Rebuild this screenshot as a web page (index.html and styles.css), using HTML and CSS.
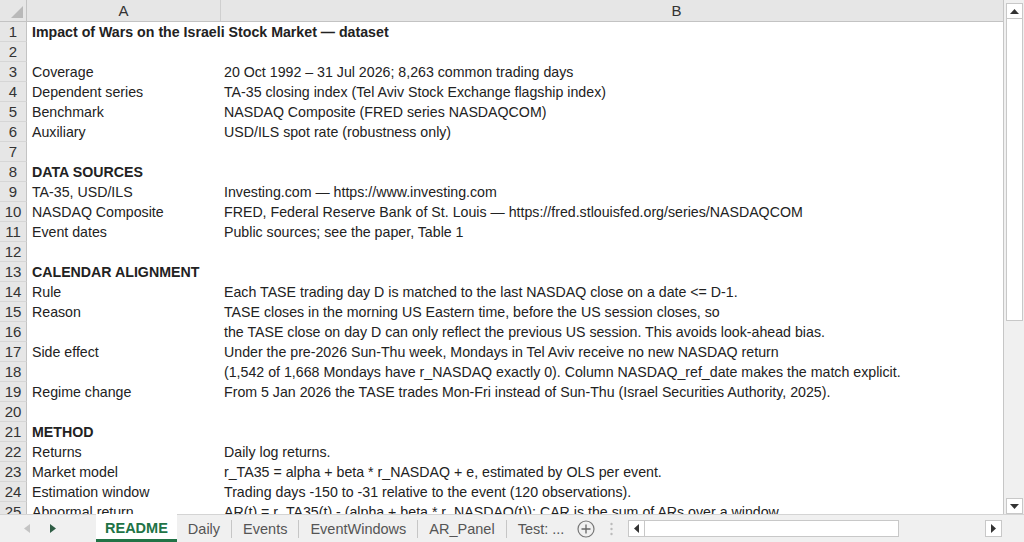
FILE: index.html
```html
<!DOCTYPE html>
<html lang="en">
<head>
    <meta charset="UTF-8">
    <title>README - Impact of Wars dataset</title>
    <link rel="stylesheet" href="styles.css">
</head>
<body>
    <div class="workbook">
        <div class="grid-area">
            <div class="sheet">
                <div class="row head-row">
                    <div class="corner">
                        <svg width="12" height="12" viewBox="0 0 12 12"><polygon points="12,0 12,12 0,12" fill="#b9b9b9"/></svg>
                    </div>
                    <div class="col-head col-a">A</div>
                    <div class="col-head col-b">B</div>
                </div>

                <div class="row"><div class="num">1</div><div class="cell col-a wide bold">Impact of Wars on the Israeli Stock Market — dataset</div><div class="cell col-b"></div></div>
                <div class="row"><div class="num">2</div><div class="cell col-a"></div><div class="cell col-b"></div></div>
                <div class="row"><div class="num">3</div><div class="cell col-a">Coverage</div><div class="cell col-b">20 Oct 1992 – 31 Jul 2026; 8,263 common trading days</div></div>
                <div class="row"><div class="num">4</div><div class="cell col-a">Dependent series</div><div class="cell col-b">TA-35 closing index (Tel Aviv Stock Exchange flagship index)</div></div>
                <div class="row"><div class="num">5</div><div class="cell col-a">Benchmark</div><div class="cell col-b">NASDAQ Composite (FRED series NASDAQCOM)</div></div>
                <div class="row"><div class="num">6</div><div class="cell col-a">Auxiliary</div><div class="cell col-b">USD/ILS spot rate (robustness only)</div></div>
                <div class="row"><div class="num">7</div><div class="cell col-a"></div><div class="cell col-b"></div></div>
                <div class="row"><div class="num">8</div><div class="cell col-a bold">DATA SOURCES</div><div class="cell col-b"></div></div>
                <div class="row"><div class="num">9</div><div class="cell col-a">TA-35, USD/ILS</div><div class="cell col-b">Investing.com — https://www.investing.com</div></div>
                <div class="row"><div class="num">10</div><div class="cell col-a">NASDAQ Composite</div><div class="cell col-b">FRED, Federal Reserve Bank of St. Louis — https://fred.stlouisfed.org/series/NASDAQCOM</div></div>
                <div class="row"><div class="num">11</div><div class="cell col-a">Event dates</div><div class="cell col-b">Public sources; see the paper, Table 1</div></div>
                <div class="row"><div class="num">12</div><div class="cell col-a"></div><div class="cell col-b"></div></div>
                <div class="row"><div class="num">13</div><div class="cell col-a wide bold">CALENDAR ALIGNMENT</div><div class="cell col-b"></div></div>
                <div class="row"><div class="num">14</div><div class="cell col-a">Rule</div><div class="cell col-b">Each TASE trading day D is matched to the last NASDAQ close on a date &lt;= D-1.</div></div>
                <div class="row"><div class="num">15</div><div class="cell col-a">Reason</div><div class="cell col-b">TASE closes in the morning US Eastern time, before the US session closes, so</div></div>
                <div class="row"><div class="num">16</div><div class="cell col-a"></div><div class="cell col-b">the TASE close on day D can only reflect the previous US session. This avoids look-ahead bias.</div></div>
                <div class="row"><div class="num">17</div><div class="cell col-a">Side effect</div><div class="cell col-b">Under the pre-2026 Sun-Thu week, Mondays in Tel Aviv receive no new NASDAQ return</div></div>
                <div class="row"><div class="num">18</div><div class="cell col-a"></div><div class="cell col-b">(1,542 of 1,668 Mondays have r_NASDAQ exactly 0). Column NASDAQ_ref_date makes the match explicit.</div></div>
                <div class="row"><div class="num">19</div><div class="cell col-a">Regime change</div><div class="cell col-b">From 5 Jan 2026 the TASE trades Mon-Fri instead of Sun-Thu (Israel Securities Authority, 2025).</div></div>
                <div class="row"><div class="num">20</div><div class="cell col-a"></div><div class="cell col-b"></div></div>
                <div class="row"><div class="num">21</div><div class="cell col-a bold">METHOD</div><div class="cell col-b"></div></div>
                <div class="row"><div class="num">22</div><div class="cell col-a">Returns</div><div class="cell col-b">Daily log returns.</div></div>
                <div class="row"><div class="num">23</div><div class="cell col-a">Market model</div><div class="cell col-b">r_TA35 = alpha + beta * r_NASDAQ + e, estimated by OLS per event.</div></div>
                <div class="row"><div class="num">24</div><div class="cell col-a">Estimation window</div><div class="cell col-b">Trading days -150 to -31 relative to the event (120 observations).</div></div>
                <div class="row"><div class="num">25</div><div class="cell col-a">Abnormal return</div><div class="cell col-b">AR(t) = r_TA35(t) - (alpha + beta * r_NASDAQ(t)); CAR is the sum of ARs over a window.</div></div>
            </div>

            <div class="vscroll">
                <div class="sbtn">
                    <svg width="9" height="5" viewBox="0 0 9 5"><polygon points="0,5 9,5 4.5,0" fill="#333"/></svg>
                </div>
                <div class="vthumb"></div>
                <div class="vtrack"></div>
                <div class="sbtn">
                    <svg width="9" height="5" viewBox="0 0 9 5"><polygon points="0,0 9,0 4.5,5" fill="#333"/></svg>
                </div>
            </div>
        </div>

        <div class="tabbar">
            <div class="nav">
                <svg width="6" height="9" viewBox="0 0 6 9"><polygon points="6,0 6,9 0,4.5" fill="#c4c4c4"/></svg>
                <svg width="6" height="9" viewBox="0 0 6 9"><polygon points="0,0 0,9 6,4.5" fill="#2f5d45"/></svg>
            </div>
            <div class="tabs">
                <div class="tab active">README</div>
                <div class="tab">Daily</div>
                <div class="tab">Events</div>
                <div class="tab">EventWindows</div>
                <div class="tab">AR_Panel</div>
                <div class="tab">Test: ...</div>
            </div>
            <div class="add-sheet">
                <svg width="18" height="18" viewBox="0 0 18 18">
                    <circle cx="9" cy="9" r="8" fill="none" stroke="#777" stroke-width="1.2"/>
                    <path d="M9 4.5v9M4.5 9h9" stroke="#666" stroke-width="1.3"/>
                </svg>
            </div>
            <div class="grip">
                <svg width="3" height="14" viewBox="0 0 3 14">
                    <circle cx="1.5" cy="2" r="1.2" fill="#bbb"/>
                    <circle cx="1.5" cy="7" r="1.2" fill="#bbb"/>
                    <circle cx="1.5" cy="12" r="1.2" fill="#bbb"/>
                </svg>
            </div>
            <div class="hscroll">
                <div class="sbtn">
                    <svg width="5" height="9" viewBox="0 0 5 9"><polygon points="5,0 5,9 0,4.5" fill="#333"/></svg>
                </div>
                <div class="hthumb"></div>
                <div class="htrack"></div>
                <div class="sbtn">
                    <svg width="5" height="9" viewBox="0 0 5 9"><polygon points="0,0 0,9 5,4.5" fill="#333"/></svg>
                </div>
            </div>
            <div class="corner-box"></div>
        </div>
    </div>
</body>
</html>
```

FILE: styles.css
```css
* {
    box-sizing: border-box;
}
body {
    margin: 0;
    font-family: "Liberation Sans", Arial, sans-serif;
    color: #222;
    background: #fff;
    overflow: hidden;
}
.workbook {
    width: 1024px;
    height: 542px;
    display: flex;
    flex-direction: column;
}
.grid-area {
    height: 514px;
    display: flex;
}
.sheet {
    flex: 1;
    overflow: hidden;
    border-right: 1px solid #c6c6c6;
}
.row {
    display: flex;
    height: 20px;
    font-size: 14.2px;
    line-height: 20px;
    white-space: nowrap;
}
.head-row {
    height: 22px;
    line-height: 21px;
    background: #e6e6e6;
    border-bottom: 1px solid #c3c3c3;
}
.corner {
    width: 27px;
    flex: none;
    display: flex;
    align-items: flex-end;
    justify-content: flex-end;
    padding: 0 3px 3px 0;
    border-right: 1px solid #c3c3c3;
}
.col-head {
    text-align: center;
    font-size: 15px;
    color: #333;
    border-right: 1px solid #cfcfcf;
}
.num {
    width: 27px;
    flex: none;
    background: #e6e6e6;
    text-align: center;
    font-size: 15px;
    color: #333;
    border-right: 1px solid #c3c3c3;
    border-bottom: 1px solid #d6d6d6;
}
.col-a {
    width: 194px;
    flex: none;
}
.col-b {
    width: 912px;
    flex: none;
}
.cell {
    padding-left: 5px;
}
.cell.col-b {
    padding-left: 3px;
}
.cell.wide {
    overflow: visible;
}
.bold {
    font-weight: bold;
}

/* vertical scrollbar */
.vscroll {
    width: 20px;
    flex: none;
    background: #f0f0f0;
    display: flex;
    flex-direction: column;
    padding: 3px 1px 0 2px;
}
.sbtn {
    width: 17px;
    height: 16px;
    flex: none;
    background: #fff;
    border: 1px solid #c8c8c8;
    display: flex;
    align-items: center;
    justify-content: center;
}
.vthumb {
    height: 302px;
    background: #fff;
    border: 1px solid #c8c8c8;
    border-top: none;
}
.vtrack {
    flex: 1;
}

/* sheet tabs */
.tabbar {
    height: 28px;
    display: flex;
    align-items: stretch;
    background: #f0f0f0;
    border-top: 1px solid #d4d4d4;
    color: #555;
    font-size: 14.5px;
}
.nav {
    width: 96px;
    flex: none;
    display: flex;
    align-items: center;
    gap: 20px;
    padding-left: 24px;
}
.tabs {
    display: flex;
    align-items: center;
}
.tab {
    padding: 0 11px;
    line-height: 18px;
    border-left: 1px solid #c6c6c6;
}
.tab.active + .tab {
    border-left: none;
}
.tab.active {
    border-left: none;
    align-self: stretch;
    display: flex;
    align-items: center;
    background: #fff;
    color: #217346;
    font-weight: bold;
    padding: 3px 9px 0;
    margin-top: -1px;
    border-bottom: 3px solid #217346;
}
.add-sheet {
    display: flex;
    align-items: center;
    margin-left: 2px;
}
.grip {
    display: flex;
    align-items: center;
    margin-left: 15px;
}
.hscroll {
    flex: 1;
    display: flex;
    align-items: center;
    margin-left: 15px;
    padding: 0 2px 0 0;
}
.hscroll .sbtn {
    width: 17px;
    height: 17px;
}
.hthumb {
    width: 254px;
    height: 17px;
    background: #fff;
    border: 1px solid #c8c8c8;
    border-left: none;
}
.htrack {
    flex: 1;
}
.corner-box {
    width: 20px;
    flex: none;
}
```
